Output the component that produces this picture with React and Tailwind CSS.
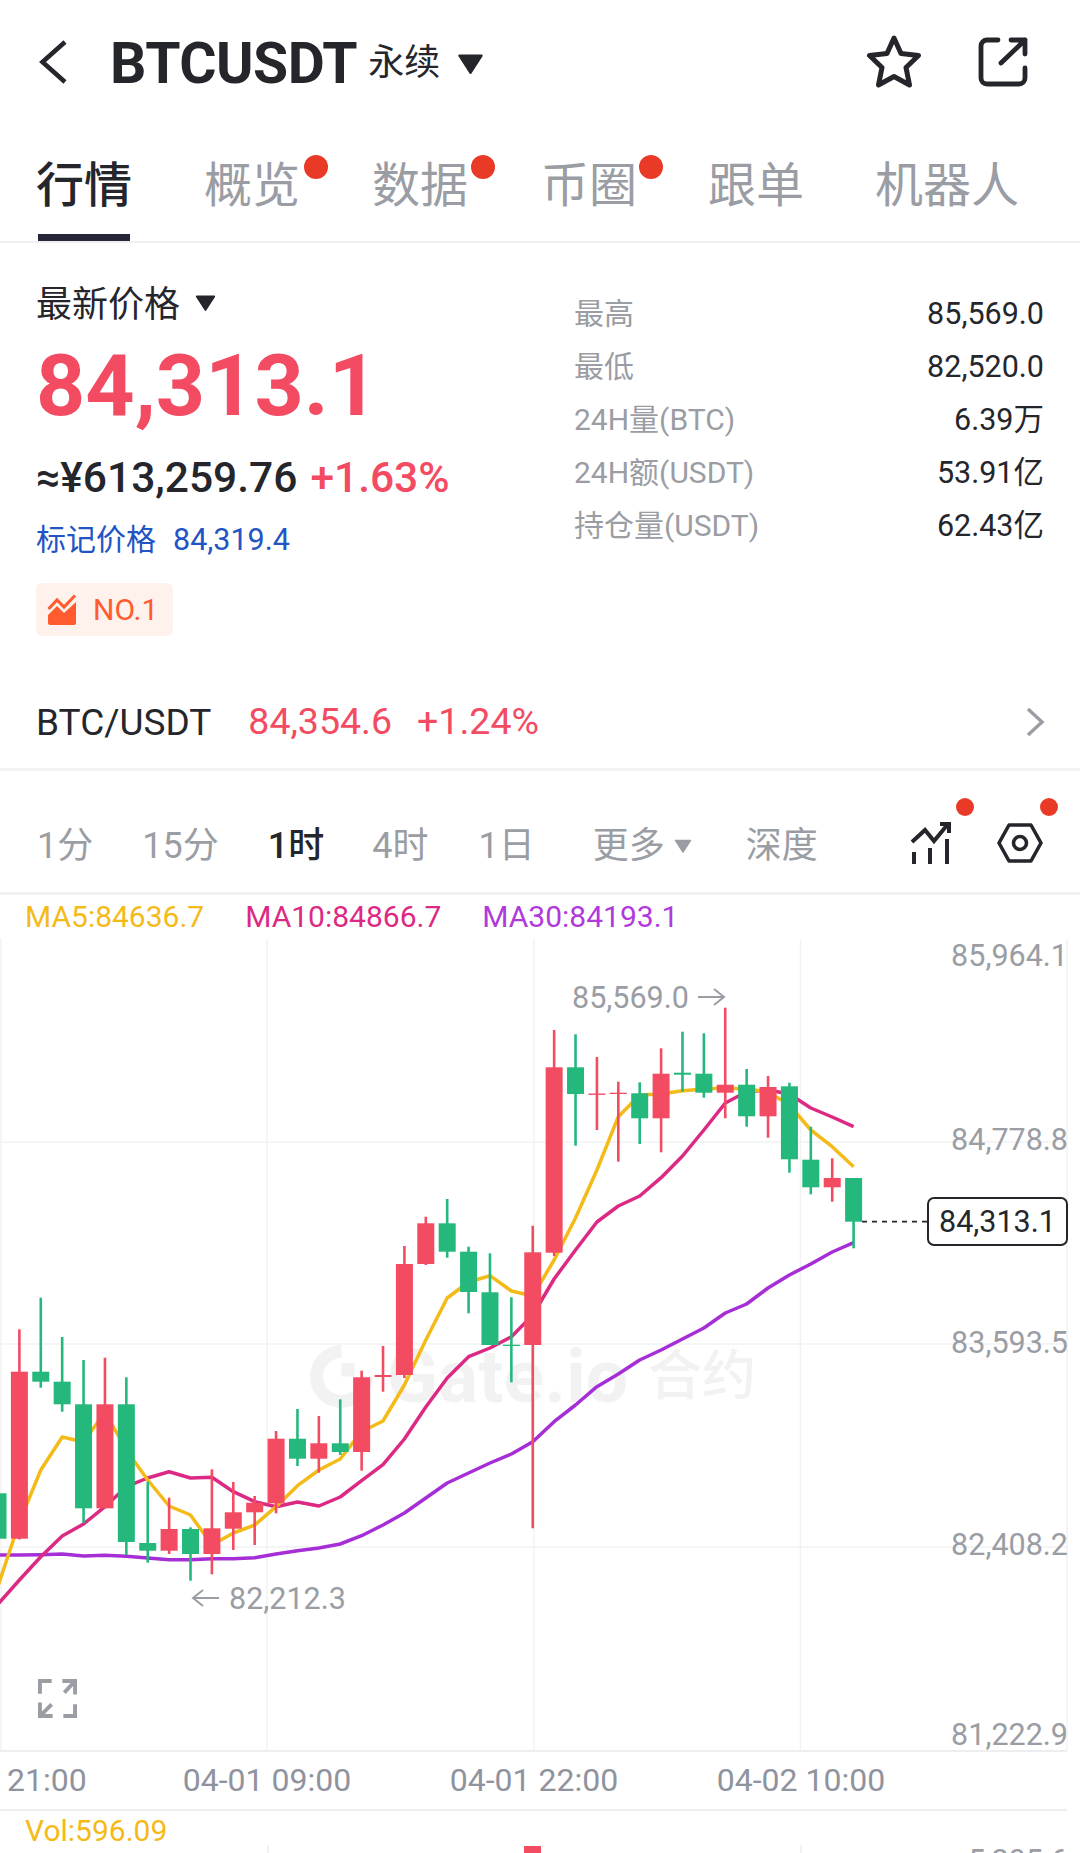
import React from "react";

const RED = "#F34B62";
const GREEN = "#25B87C";
const px = (i) => -2 + 21.39 * i;

const candles = [
  ["g", 1493, 1493.3, 1538.7, 1539],
  ["r", 1329.3, 1371.7, 1538.7, 1539.5],
  ["g", 1297.7, 1371.7, 1381.7, 1387.7],
  ["g", 1337, 1381.7, 1404.3, 1411.7],
  ["g", 1360, 1404.3, 1508.3, 1523],
  ["r", 1357.7, 1404.3, 1508.3, 1508.3],
  ["g", 1377.3, 1404.3, 1542, 1555],
  ["g", 1481.7, 1543, 1550.7, 1562.7],
  ["r", 1497.7, 1529, 1550.7, 1554],
  ["g", 1527.3, 1529, 1554, 1580.7],
  ["r", 1469.3, 1528.3, 1554, 1574.3],
  ["r", 1482, 1512.3, 1528.7, 1550],
  ["r", 1496, 1502.7, 1512.3, 1545],
  ["r", 1431, 1438.7, 1503.3, 1513.3],
  ["g", 1409, 1438.7, 1458.7, 1466],
  ["r", 1416, 1443.3, 1458.7, 1472.7],
  ["g", 1399.3, 1443.3, 1452, 1455],
  ["r", 1370.7, 1377.3, 1452, 1470.7],
  ["r", 1346, 1375, 1377, 1391.7],
  ["r", 1246, 1264, 1375, 1378],
  ["r", 1216.7, 1223.3, 1264, 1265],
  ["g", 1199, 1223.3, 1251.7, 1257.7],
  ["g", 1246.7, 1251.7, 1292, 1313.3],
  ["g", 1253.3, 1292.3, 1345, 1345],
  ["g", 1297.3, 1344.7, 1346, 1382.3],
  ["r", 1225.7, 1252.3, 1345, 1528.3],
  ["r", 1030, 1067.3, 1252.7, 1256],
  ["g", 1034.3, 1067.3, 1094, 1145.7],
  ["r", 1057, 1093.5, 1094.9, 1130],
  ["r", 1081.7, 1092.7, 1094, 1161.7],
  ["g", 1082.3, 1093.3, 1118.3, 1144],
  ["r", 1048.3, 1073.7, 1118.3, 1152.3],
  ["g", 1031.7, 1072.7, 1074.7, 1091.7],
  ["g", 1033.3, 1073.7, 1092.7, 1097.7],
  ["r", 1007.7, 1084.7, 1092.7, 1118.3],
  ["g", 1069, 1084.7, 1116.3, 1126.7],
  ["r", 1076, 1087, 1116.3, 1137.7],
  ["g", 1082.7, 1086.3, 1159.3, 1172.7],
  ["g", 1126.7, 1159.7, 1187.3, 1194.3],
  ["r", 1158.3, 1178, 1187.3, 1201.7],
  ["g", 1178, 1178, 1221.7, 1248.3],
];

const ma5 = [1586,1522,1470,1437,1442,1412,1450,1480,1506,1515,1545,1533,1525,1506.7,1485.7,1470,1459,1431.7,1421,1385,1340,1298,1282,1275.7,1291,1296,1260,1218,1170,1116.7,1095,1094,1090.7,1089,1088,1089,1091.7,1105,1130,1146.7,1166.7];
const ma10 = [1604,1580,1556.7,1536,1524,1506.7,1486.7,1478,1471.7,1478,1477.3,1491.7,1501.7,1506.7,1502,1506,1497,1480.7,1464.7,1439,1407,1378,1356.7,1348,1336.7,1315,1279,1250,1222,1206,1196,1177.7,1156,1130,1103,1091.7,1090,1094,1108,1117,1126.7];
const ma30 = [1555,1555,1554.7,1554,1556,1555.3,1556.3,1558,1559.7,1559.7,1558.7,1558.7,1557.7,1554,1550.7,1548,1544,1535.7,1525,1513,1498,1483,1473,1463,1454,1441.7,1421.7,1405,1386.7,1374,1360,1350,1339,1328,1313,1304,1288,1275,1264,1252,1242.7];
const pts = (a) => a.map((y, i) => `${px(i).toFixed(1)},${y}`).join(" ");

function Tri({ className, color = "#25262C" }) {
  return (
    <svg viewBox="0 0 24 18" className={className}>
      <path d="M2 1.5H22L12 17Z" fill={color} stroke={color} strokeWidth="2" strokeLinejoin="round" />
    </svg>
  );
}

function Dot({ className }) {
  return <span className={`absolute rounded-full bg-[#E93A27] ${className}`} />;
}

function Stat({ label, value }) {
  return (
    <div className="flex h-[53px] items-center justify-between">
      <span className="text-[30px] text-[#9A9DA3]">{label}</span>
      <span className="text-[30.5px] text-[#25262C]">{value}</span>
    </div>
  );
}

function AxisLabel({ className, children }) {
  return (
    <span className={`absolute right-[12px] text-[30.5px] leading-[36px] text-[#9A9DA3] ${className}`}>{children}</span>
  );
}

function Chart() {
  return (
    <div className="relative h-[811px] w-full">
      <div className="absolute left-[310px] top-[406px] flex h-[63px] items-center text-[#F2F2F3]">
        <svg viewBox="0 0 63 63" className="h-[63px] w-[63px]">
          <path d="M31.5 0A31.5 31.5 0 1 0 63 31.5H50A18.5 18.5 0 1 1 31.5 13Z" fill="currentColor" />
          <rect x="31.5" y="18" width="13" height="13.5" fill="currentColor" />
        </svg>
        <span className="ml-[14px] text-[75px] font-bold leading-[63px]">Gate.io</span>
        <span className="ml-[20px] text-[54px] font-medium leading-[63px]">合约</span>
      </div>
      <svg viewBox="0 939 1080 811" className="absolute inset-0 h-[811px] w-[1080px]">
        <g stroke="#F2F2F3" strokeWidth="1.5">
          <line x1="0" x2="1067" y1="1142" y2="1142" />
          <line x1="0" x2="1067" y1="1344" y2="1344" />
          <line x1="0" x2="1067" y1="1547" y2="1547" />
          <line x1="1" x2="1" y1="939" y2="1750" />
          <line x1="267" x2="267" y1="939" y2="1750" />
          <line x1="534" x2="534" y1="939" y2="1750" />
          <line x1="800.5" x2="800.5" y1="939" y2="1750" />
          <line x1="1067" x2="1067" y1="939" y2="1750" />
        </g>
        <polyline points={pts(ma30)} fill="none" stroke="#A62ED6" strokeWidth="3.5" strokeLinejoin="round" />
        <polyline points={pts(ma10)} fill="none" stroke="#DC2A84" strokeWidth="3.5" strokeLinejoin="round" />
        <polyline points={pts(ma5)} fill="none" stroke="#F4BA18" strokeWidth="3.5" strokeLinejoin="round" />
        {candles.map(([c, high, top, bottom, low], i) => {
          const col = c === "r" ? RED : GREEN;
          return (
            <g key={i}>
              <line x1={px(i)} x2={px(i)} y1={high} y2={low} stroke={col} strokeWidth="2.6" />
              <rect x={px(i) - 8.5} y={top} width="17" height={bottom - top} fill={col} />
            </g>
          );
        })}
        <line x1="862" x2="928" y1="1221.7" y2="1221.7" stroke="#25262C" strokeWidth="1.8" strokeDasharray="5 5" />
        <path d="M698 997H724M714 989L724 997L714 1005" fill="none" stroke="#9A9DA3" strokeWidth="2" />
        <path d="M219 1598H193M203 1590L193 1598L203 1606" fill="none" stroke="#9A9DA3" strokeWidth="2" />
      </svg>

      <AxisLabel className="top-[-1px]">85,964.1</AxisLabel>
      <AxisLabel className="top-[183px]">84,778.8</AxisLabel>
      <AxisLabel className="top-[386px]">83,593.5</AxisLabel>
      <AxisLabel className="top-[588px]">82,408.2</AxisLabel>
      <AxisLabel className="top-[778px]">81,222.9</AxisLabel>

      <span className="absolute left-[572px] top-[41px] text-[30.5px] leading-[36px] text-[#9A9DA3]">85,569.0</span>
      <span className="absolute left-[229px] top-[642px] text-[30.5px] leading-[36px] text-[#9A9DA3]">82,212.3</span>

      <div className="absolute left-[927px] top-[258px] flex h-[49px] w-[141px] items-center justify-center rounded-[7px] border-2 border-[#25262C] bg-white text-[30.5px] text-[#25262C]">
        84,313.1
      </div>

      <svg viewBox="0 0 40 40" className="absolute left-[38px] top-[740px] h-[39px] w-[39px]" fill="none" stroke="#9A9DA3" strokeWidth="4">
        <path d="M2 15V2H14" />
        <path d="M25 2H38V16M38 2L27 14" />
        <path d="M2 24V38H15M2 38L14 26" />
        <path d="M38 26V38H26" />
      </svg>
    </div>
  );
}

export default function App() {
  return (
    <div className="h-[1853px] w-[1080px] overflow-hidden bg-white font-['Roboto','Noto_Sans_CJK_SC',sans-serif] text-[#25262C]">
      <header className="flex h-[124px] items-center pl-[39px] pr-[52px]">
        <svg viewBox="0 0 28 44" className="h-[44px] w-[28px]" fill="none" stroke="#25262C" strokeWidth="4.6">
          <path d="M26 2L3.5 22L26 42" />
        </svg>
        <span className="ml-[43px] mt-[2px] text-[57px] font-bold leading-none tracking-[-0.5px]">BTCUSDT</span>
        <span className="ml-[11px] mt-[2px] text-[36px] leading-none">永续</span>
        <Tri className="ml-[17px] mt-[4px] h-[20px] w-[27px]" />
        <svg viewBox="0 0 56 56" className="ml-auto h-[56px] w-[56px]" fill="none" stroke="#25262C" strokeWidth="5" strokeLinejoin="round">
          <path d="M28 4L35 19.5L52.5 21.5L40 33.5L43.5 51L28 42.5L12.5 51L16 33.5L3.5 21.5L21 19.5Z" />
        </svg>
        <svg viewBox="0 0 50 50" className="ml-[56px] h-[50px] w-[50px]" fill="none" stroke="#25262C" strokeWidth="4.8" strokeLinecap="round" strokeLinejoin="round">
          <path d="M20 3H9A6 6 0 0 0 3 9V41A6 6 0 0 0 9 47H41A6 6 0 0 0 47 41V31" />
          <path d="M23 26L47 3M33 3H47V17" />
        </svg>
      </header>

      <nav className="relative flex h-[119px] items-start border-b-2 border-[#EFF0F2] pl-[38px] pt-[38px] text-[48px] leading-[48px] text-[#9A9DA3]">
        <div className="relative h-[79px] w-[92px]">
          <span className="absolute left-[-2px] whitespace-nowrap font-medium text-[#25262C]">行情</span>
          <span className="absolute bottom-0 left-0 h-[7px] w-full bg-[#25253A]" />
        </div>
        <div className="relative ml-[74px]">概览<Dot className="left-[100px] top-[-7px] h-[24px] w-[24px]" /></div>
        <div className="relative ml-[72px]">数据<Dot className="left-[99px] top-[-7px] h-[24px] w-[24px]" /></div>
        <div className="relative ml-[73px]">币圈<Dot className="left-[98px] top-[-7px] h-[24px] w-[24px]" /></div>
        <div className="ml-[71px]">跟单</div>
        <div className="ml-[71px]">机器人</div>
      </nav>

      <section className="flex h-[433px] pl-[36px] pr-[36px]">
        <div className="w-[538px] pt-[40px]">
          <div className="flex h-[44px] items-center text-[36px] leading-none">
            最新价格
            <Tri className="ml-[15px] mb-[5px] h-[16px] w-[21px]" />
          </div>
          <div className="mt-[9px] h-[100px] text-[86px] font-bold leading-[100px] text-[#F34B62]">84,313.1</div>
          <div className="mt-[17px] flex h-[50px] items-center text-[42.5px] font-medium leading-none">
            <span>≈¥613,259.76</span>
            <span className="ml-[13px] text-[#F34B62]">+1.63%</span>
          </div>
          <div className="mt-[17px] flex h-[40px] items-center text-[30px] leading-none text-[#2354C4]">
            <span>标记价格</span>
            <span className="ml-[17px] text-[30.5px]">84,319.4</span>
          </div>
          <div className="mt-[23px] flex h-[53px] w-[137px] items-center rounded-[6px] bg-[#FFF1EC] pl-[11px]">
            <svg viewBox="0 0 31 31" className="h-[31px] w-[31px]">
              <path d="M1.5 15L10 6L17 13L28 1.5" fill="none" stroke="#FF5B2E" strokeWidth="3" />
              <path d="M1 21L10 12L17 19L29 8V29A2 2 0 0 1 27 31H3A2 2 0 0 1 1 29Z" fill="#FF5B2E" />
            </svg>
            <span className="ml-[15px] text-[30px] leading-none text-[#FF5B2E]">NO.1</span>
          </div>
        </div>
        <div className="flex-1 pt-[44px]">
          <Stat label="最高" value="85,569.0" />
          <Stat label="最低" value="82,520.0" />
          <Stat label="24H量(BTC)" value="6.39万" />
          <Stat label="24H额(USDT)" value="53.91亿" />
          <Stat label="持仓量(USDT)" value="62.43亿" />
        </div>
      </section>

      <div className="flex h-[95px] items-center border-b-[3px] border-[#F1F2F4] pl-[36px] pr-[35px] text-[37px] leading-none">
        <span>BTC/USDT</span>
        <span className="ml-[37px] text-[37.5px] text-[#F34B62]">84,354.6</span>
        <span className="ml-[25px] text-[37.5px] text-[#F34B62]">+1.24%</span>
        <svg viewBox="0 0 20 30" className="ml-auto h-[30px] w-[20px]" fill="none" stroke="#9A9DA3" strokeWidth="3.4">
          <path d="M3 2L17 15L3 28" />
        </svg>
      </div>

      <div className="relative flex h-[124px] items-center border-b-[3px] border-[#F1F2F4] pl-[37px] pt-[29px] text-[36px] leading-none text-[#9A9DA3]">
        <span>1分</span>
        <span className="ml-[49px]">15分</span>
        <span className="ml-[49px] font-medium text-[#25262C]">1时</span>
        <span className="ml-[48px]">4时</span>
        <span className="ml-[50px]">1日</span>
        <span className="ml-[58px]">更多</span>
        <Tri color="#9A9DA3" className="ml-[9px] h-[14px] w-[18px]" />
        <span className="ml-[54px]">深度</span>
        <svg viewBox="0 0 42 44" className="absolute left-[909px] top-[51px] h-[44px] w-[42px]" fill="none" stroke="#25262C" strokeWidth="4">
          <path d="M3 20L16 8L25 19L39 2" />
          <path d="M31 2H40V11" />
          <path d="M5 30V42M21 26V42M38 17V42" />
        </svg>
        <svg viewBox="0 0 46 40" className="absolute left-[997px] top-[52px] h-[40px] w-[46px]" fill="none" stroke="#25262C" strokeWidth="3.6" strokeLinejoin="round">
          <path d="M12 2H34L44 20L34 38H12L2 20Z" />
          <circle cx="23" cy="20" r="6.5" />
        </svg>
        <Dot className="left-[956px] top-[27px] h-[18px] w-[18px]" />
        <Dot className="left-[1040px] top-[27px] h-[18px] w-[18px]" />
      </div>

      <div className="flex h-[44px] items-center pl-[25px] text-[30px] leading-none">
        <span className="text-[#F4BA18]">MA5:84636.7</span>
        <span className="ml-[41px] text-[#DC2A84]">MA10:84866.7</span>
        <span className="ml-[41px] text-[#B03ADB]">MA30:84193.1</span>
      </div>

      <Chart />

      <div className="relative h-[61px] w-[1067px] border-y-2 border-[#EDEEF0] text-[32px] leading-[57px] text-[#8F939E]">
        <span className="absolute left-[7px]">21:00</span>
        <span className="absolute left-[267px] -translate-x-1/2 whitespace-nowrap">04-01 09:00</span>
        <span className="absolute left-[534px] -translate-x-1/2 whitespace-nowrap">04-01 22:00</span>
        <span className="absolute left-[801px] -translate-x-1/2 whitespace-nowrap">04-02 10:00</span>
      </div>

      <div className="relative h-[42px] overflow-hidden">
        <span className="absolute left-[25px] top-0 text-[30px] leading-[40px] text-[#F4BA18]">Vol:596.09</span>
        <span className="absolute left-[524px] top-[35px] h-[10px] w-[17px] bg-[#F34B62]" />
        <span className="absolute left-[267px] top-[34px] h-[10px] w-[2px] bg-[#F2F2F3]" />
        <span className="absolute left-[800px] top-[34px] h-[10px] w-[2px] bg-[#F2F2F3]" />
        <span className="absolute right-[12px] top-[32px] text-[30.5px] leading-[36px] text-[#9A9DA3]">5,205.6</span>
      </div>
    </div>
  );
}
